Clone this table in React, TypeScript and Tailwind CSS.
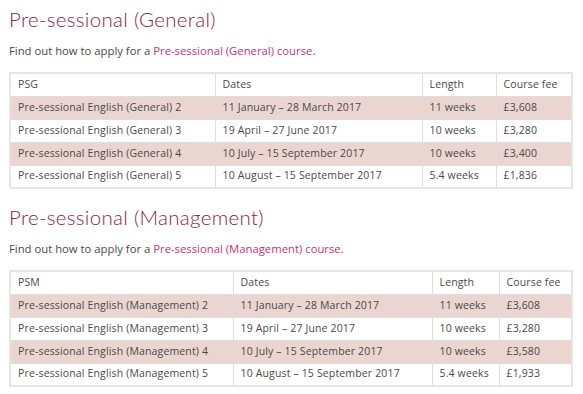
const general = [
  ["Pre-sessional English (General) 2", "11 January – 28 March 2017", "11 weeks", "£3,608"],
  ["Pre-sessional English (General) 3", "19 April – 27 June 2017", "10 weeks", "£3,280"],
  ["Pre-sessional English (General) 4", "10 July – 15 September 2017", "10 weeks", "£3,400"],
  ["Pre-sessional English (General) 5", "10 August – 15 September 2017", "5.4 weeks", "£1,836"],
];

const management = [
  ["Pre-sessional English (Management) 2", "11 January – 28 March 2017", "11 weeks", "£3,608"],
  ["Pre-sessional English (Management) 3", "19 April – 27 June 2017", "10 weeks", "£3,280"],
  ["Pre-sessional English (Management) 4", "10 July – 15 September 2017", "10 weeks", "£3,580"],
  ["Pre-sessional English (Management) 5", "10 August – 15 September 2017", "5.4 weeks", "£1,933"],
];

const CourseTable = ({ code, rows, widths }: { code: string; rows: string[][]; widths: string[] }) => {
  return (
    <table className="w-[562px] table-fixed border-collapse border-2 border-[#e6e6e6] text-[10.5px] tracking-[0.15px] text-[#4a4a4a]">
      <colgroup>
        {widths.map((w, i) => (
          <col key={i} className={w} />
        ))}
      </colgroup>
      <thead>
        <tr className="h-[23px] bg-white">
          {[code, "Dates", "Length", "Course fee"].map((h) => (
            <th key={h} className="border border-[#dedede] px-[7px] text-left font-normal">
              {h}
            </th>
          ))}
        </tr>
      </thead>
      <tbody>
        {rows.map((r, i) => (
          <tr key={i} className={`h-[23px] ${i % 2 === 0 ? "bg-[#ebd5d0]" : "bg-white"}`}>
            {r.map((c, j) => (
              <td key={j} className="border border-[#dedede] px-[7px] whitespace-nowrap">
                {c}
              </td>
            ))}
          </tr>
        ))}
      </tbody>
    </table>
  );
};

const Section = ({
  title,
  link,
  code,
  rows,
  widths,
}: {
  title: string;
  link: string;
  code: string;
  rows: string[][];
  widths: string[];
}) => {
  return (
    <section className="flex flex-col">
      <h2 className="text-[20.5px] leading-[26px] text-[#8c2449] font-['Lato',sans-serif] font-light tracking-[0.3px]">
        {title}
      </h2>
      <p className="mt-[11px] text-[11.3px] leading-[16px] text-[#4a4a4a]">
        Find out how to apply for a <a className="text-[#c8337b]">{link}</a>.
      </p>
      <div className="mt-[13px]">
        <CourseTable code={code} rows={rows} widths={widths} />
      </div>
    </section>
  );
};

export default function App() {
  return (
    <div className="w-[583px] h-[394px] overflow-hidden bg-white pl-[9px] pt-[6px] flex flex-col gap-[15px] font-['Open_Sans',sans-serif]">
      <Section
        title="Pre-sessional (General)"
        link="Pre-sessional (General) course"
        code="PSG"
        rows={general}
        widths={["w-[205px]", "w-[207px]", "w-[74px]", "w-[76px]"]}
      />
      <Section
        title="Pre-sessional (Management)"
        link="Pre-sessional (Management) course"
        code="PSM"
        rows={management}
        widths={["w-[223px]", "w-[199px]", "w-[67px]", "w-[73px]"]}
      />
    </div>
  );
}
